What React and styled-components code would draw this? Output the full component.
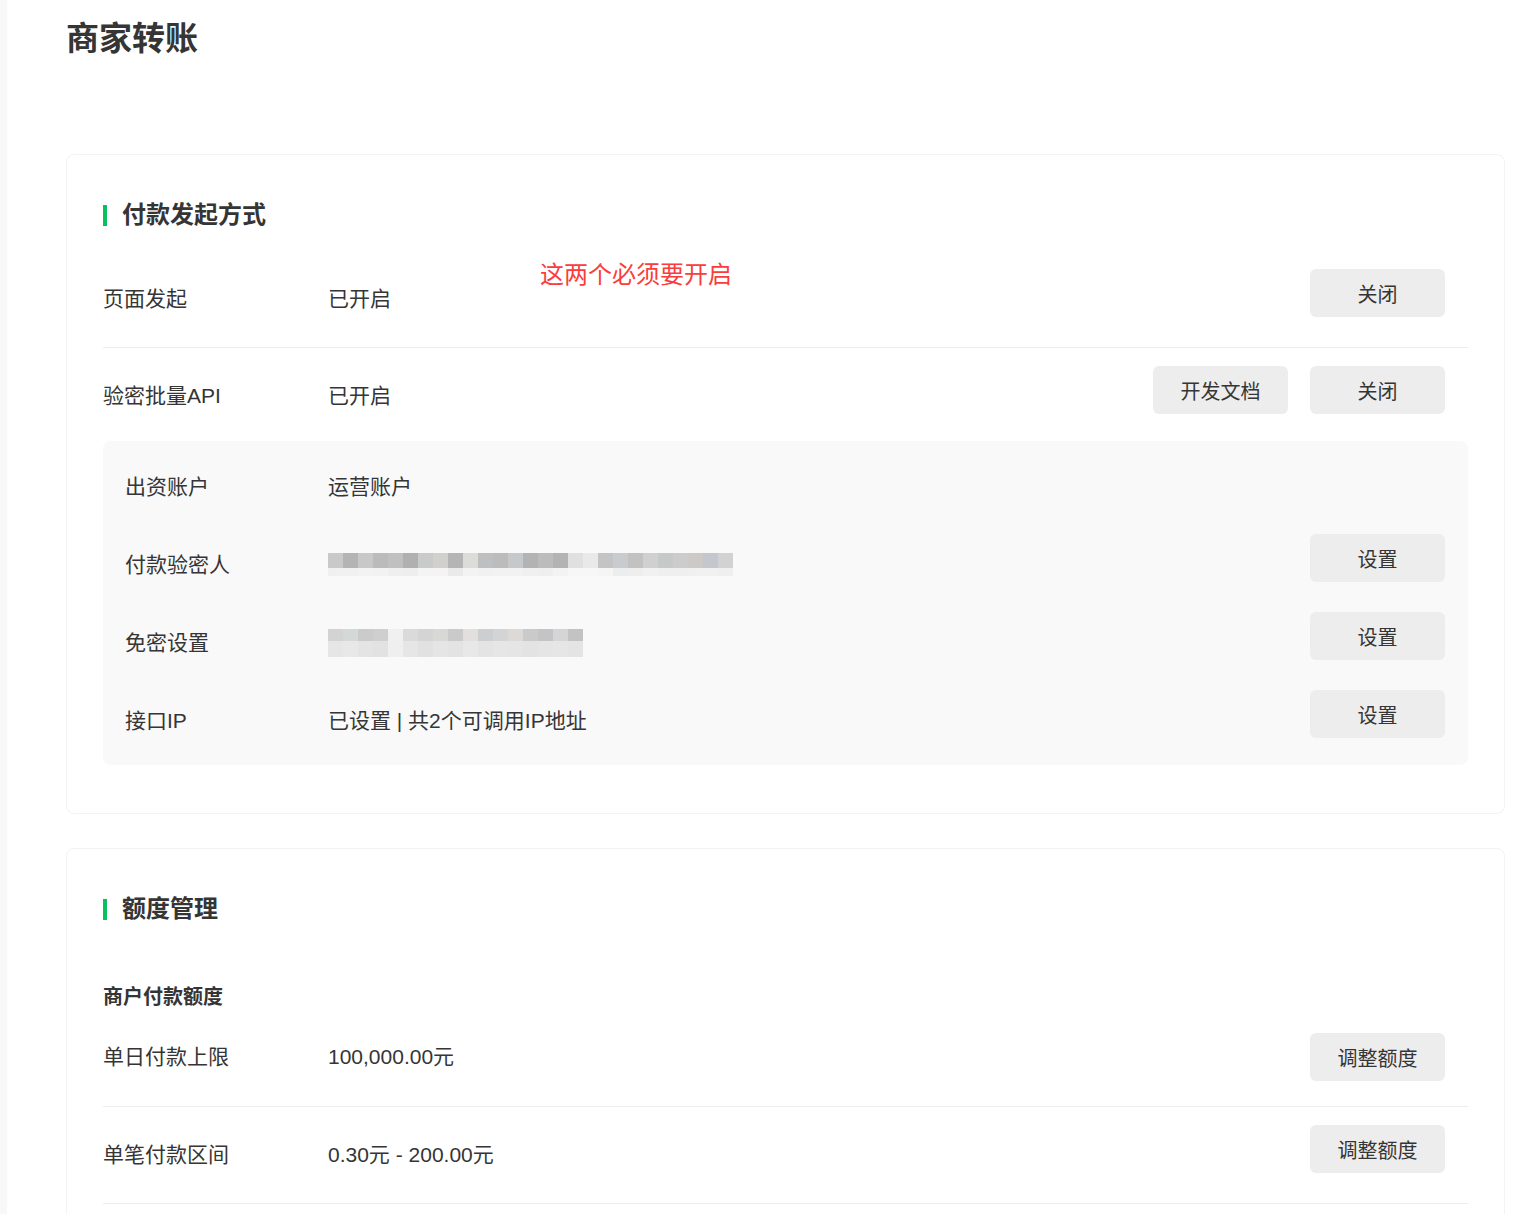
import styled, { createGlobalStyle } from "styled-components";

const GlobalStyle = createGlobalStyle`
  body {
    margin: 0;
    background: #ffffff;
    font-family: "Liberation Sans", "Noto Sans CJK SC", sans-serif;
    color: #353535;
  }
`;

const Layout = styled.div`
  display: flex;
  min-height: 1214px;
`;

const SideEdge = styled.div`
  width: 7px;
  flex: none;
  background: #f8f8f8;
`;

const Main = styled.main`
  flex: 1;
  padding: 17px 10px 0 59px;
  overflow: hidden;
`;

const PageTitle = styled.h1`
  margin: 0 0 93px 0;
  font-size: 33px;
  line-height: 44px;
  font-weight: 700;
  color: #353535;
`;

const Card = styled.section`
  border: 1px solid #f3f3f3;
  border-radius: 8px;
  padding: 44px 36px ${({ $bottom }) => $bottom ?? 48}px;
  margin-bottom: 34px;
`;

const SectionTitle = styled.h2`
  display: flex;
  align-items: center;
  gap: 15px;
  margin: 0 0 20px;
  font-size: 24px;
  line-height: 32px;
  font-weight: 700;
  color: #353535;

  &::before {
    content: "";
    width: 4px;
    height: 21px;
    background: #07c160;
  }
`;

const SubTitle = styled.h3`
  margin: 58px 0 4px;
  font-size: 20px;
  line-height: 28px;
  font-weight: 700;
  color: #353535;
`;

const Row = styled.div`
  position: relative;
  display: flex;
  align-items: center;
  padding: 18px 23px ${({ $bottom }) => $bottom ?? 30}px 0;
  border-bottom: ${({ $divider }) => ($divider ? "1px solid #ececec" : "none")};
`;

const PanelRow = styled.div`
  display: flex;
  align-items: center;
  height: 78px;
  padding-right: 23px;
`;

const Label = styled.div`
  width: ${({ $w }) => $w}px;
  flex: none;
  font-size: 21px;
  line-height: 28px;
  padding-top: ${({ $shift }) => $shift ?? 12}px;
  color: #353535;
`;

const Value = styled.div`
  flex: 1;
  font-size: 21px;
  line-height: 28px;
  padding-top: ${({ $shift }) => $shift ?? 12}px;
  color: #353535;
`;

const Actions = styled.div`
  display: flex;
  gap: 22px;
  margin-left: auto;
`;

const Button = styled.button`
  width: 135px;
  height: 48px;
  border: none;
  border-radius: 6px;
  background: #ededed;
  color: #353535;
  font-family: inherit;
  font-size: 20px;
  cursor: pointer;
`;

const Note = styled.span`
  position: absolute;
  left: 437px;
  top: 8px;
  font-size: 24px;
  line-height: 32px;
  color: #fa3c3c;
`;

const Panel = styled.div`
  background: #f9f9f9;
  border-radius: 8px;
  padding: 0 0 12px 22px;
`;

const Mosaic = styled.div`
  display: flex;
  flex-direction: column;
  width: ${({ $w }) => $w}px;
  margin-top: ${({ $top }) => $top}px;
`;

const MosaicLine = styled.div`
  display: flex;
  height: ${({ $h }) => $h}px;
`;

const Tile = styled.span`
  width: 15px;
  flex: none;
`;

const topA = ["#c9c9c9", "#b4b4b4", "#c8c8c8", "#bdbbba", "#c0c0c0", "#b0b0b0", "#c9cbcb", "#d1d0cc", "#b5b5b5", "#dcdcd8", "#bdbfc1", "#bcbcbc", "#c5c9cc", "#b3b3b3", "#bcbcba", "#b3b3b3", "#e0e0e0", "#e9e9e9", "#c4c4c4", "#c9ccce", "#c4c2c0", "#ced1cf", "#c7c9c9", "#cccccc", "#ccc9c6", "#c4c7cd", "#d2d2d2"];
const botA = ["#f0f0f0", "#f1f1f1", "#f3f3f3", "#f2f2f2", "#efefef", "#eeeeee", "#f4f4f4", "#f4f4f4", "#eaeaea", "#f3f3f3", "#f1f1f1", "#f2f2f2", "#f2f2f2", "#f0f0f0", "#efefef", "#f3f3f3", "#f7f7f7", "#f7f7f7", "#f5f5f5", "#eceded", "#eeeeee", "#f1f1f1", "#efefef", "#efefef", "#f0f0f0", "#f1f1f1", "#efefef"];
const topB = ["#d3d3d3", "#d5d8d9", "#cbcbcb", "#d0cfcf", "#f0f0f0", "#dadada", "#d4d4d4", "#d8d8d4", "#cacaca", "#e2dfde", "#cbcfd1", "#d4d4d4", "#dcd9d6", "#cacaca", "#c4c4c6", "#d5d5d5", "#c3c3c3"];
const botB = ["#e6e6e6", "#e8e8e8", "#e4e4e4", "#e2e2e2", "#efefef", "#e6e6e6", "#e1e1e1", "#e5e5e5", "#e3e3e3", "#e8e8e8", "#e4e4e4", "#e6e6e6", "#e5e5e5", "#e3e3e3", "#e5e5e5", "#e6e6e6", "#e4e4e4"];

function Pixelated({ top, bottom, h1, h2, offset }) {
  return (
    <Mosaic $w={top.length * 15} $top={offset}>
      <MosaicLine $h={h1}>
        {top.map((c, i) => (
          <Tile key={i} style={{ background: c }} />
        ))}
      </MosaicLine>
      <MosaicLine $h={h2}>
        {bottom.map((c, i) => (
          <Tile key={i} style={{ background: c }} />
        ))}
      </MosaicLine>
    </Mosaic>
  );
}

export default function App() {
  return (
    <>
      <GlobalStyle />
      <Layout>
        <SideEdge />
        <Main>
          <PageTitle>商家转账</PageTitle>

          <Card>
            <SectionTitle>付款发起方式</SectionTitle>
            <Row $divider>
              <Label $w={225}>页面发起</Label>
              <Value>已开启</Value>
              <Note>这两个必须要开启</Note>
              <Actions>
                <Button>关闭</Button>
              </Actions>
            </Row>
            <Row $bottom={27}>
              <Label $w={225}>验密批量API</Label>
              <Value>已开启</Value>
              <Actions>
                <Button>开发文档</Button>
                <Button>关闭</Button>
              </Actions>
            </Row>
            <Panel>
              <PanelRow>
                <Label $w={203} $shift={14}>出资账户</Label>
                <Value $shift={14}>运营账户</Value>
              </PanelRow>
              <PanelRow>
                <Label $w={203} $shift={14}>付款验密人</Label>
                <Value $shift={14}>
                  <Pixelated top={topA} bottom={botA} h1={15} h2={8} offset={-2} />
                </Value>
                <Actions>
                  <Button>设置</Button>
                </Actions>
              </PanelRow>
              <PanelRow>
                <Label $w={203} $shift={14}>免密设置</Label>
                <Value $shift={14}>
                  <Pixelated top={topB} bottom={botB} h1={12} h2={16} offset={0} />
                </Value>
                <Actions>
                  <Button>设置</Button>
                </Actions>
              </PanelRow>
              <PanelRow>
                <Label $w={203} $shift={14}>接口IP</Label>
                <Value $shift={14}>已设置 | 共2个可调用IP地址</Value>
                <Actions>
                  <Button>设置</Button>
                </Actions>
              </PanelRow>
            </Panel>
          </Card>

          <Card $bottom={60}>
            <SectionTitle>额度管理</SectionTitle>
            <SubTitle>商户付款额度</SubTitle>
            <Row $divider $bottom={25}>
              <Label $w={225} $shift={0}>单日付款上限</Label>
              <Value $shift={0}>100,000.00元</Value>
              <Actions>
                <Button>调整额度</Button>
              </Actions>
            </Row>
            <Row $divider>
              <Label $w={225} $shift={12}>单笔付款区间</Label>
              <Value $shift={12}>0.30元 - 200.00元</Value>
              <Actions>
                <Button>调整额度</Button>
              </Actions>
            </Row>
          </Card>
        </Main>
      </Layout>
    </>
  );
}
